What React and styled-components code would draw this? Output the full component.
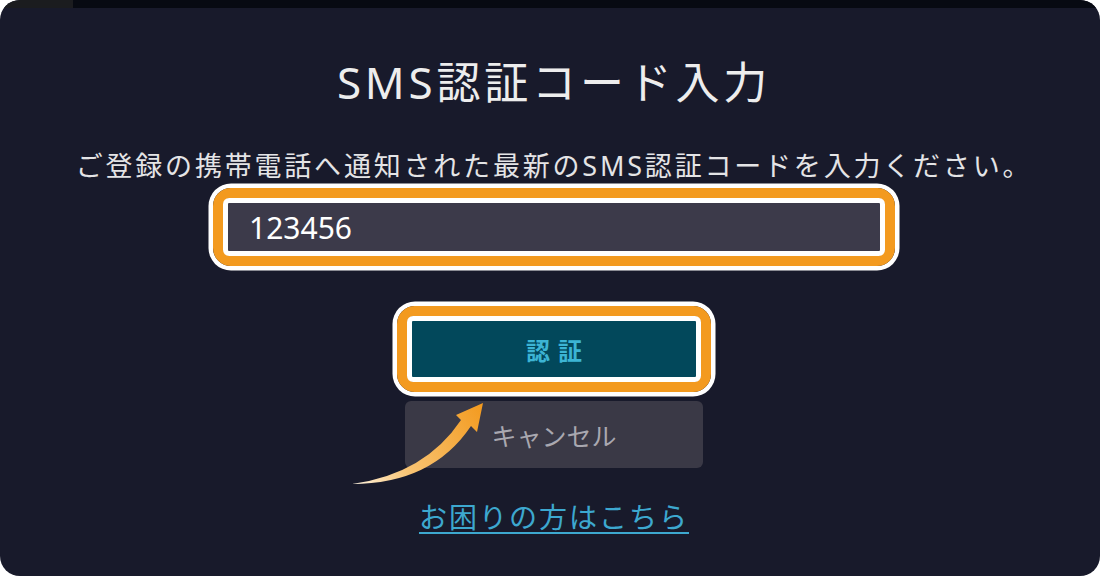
import React from 'react';
import styled, { createGlobalStyle } from 'styled-components';

const GlobalStyle = createGlobalStyle`
  html, body {
    margin: 0;
    background: #ffffff;
  }
  body {
    font-family: "Noto Sans", "Noto Sans CJK JP", sans-serif;
  }
`;

export default function App() {
  return (
    <>
      <GlobalStyle />
      <Frame>
        <TopStrip>
          <StripPart $w="73px" $c="#1b1c1f" />
          <StripPart $c="#070a12" />
        </TopStrip>
        <Content>
          <Title>SMS認証コード入力</Title>
          <Lead>ご登録の携帯電話へ通知された最新のSMS認証コードを入力ください。</Lead>
          <Highlight $mt="9px">
            <CodeInput defaultValue="123456" readOnly />
          </Highlight>
          <Highlight $mt="40px">
            <AuthButton>認証</AuthButton>
          </Highlight>
          <CancelButton>キャンセル</CancelButton>
          <HelpLink href="#">お困りの方はこちら</HelpLink>
        </Content>
        <Arrow viewBox="340 390 160 110" width="160" height="110">
          <defs>
            <linearGradient id="arrowGrad" x1="352" y1="484" x2="483" y2="404" gradientUnits="userSpaceOnUse">
              <stop offset="0" stopColor="#fff4e2" />
              <stop offset="0.35" stopColor="#f8c474" />
              <stop offset="1" stopColor="#f39a1e" />
            </linearGradient>
          </defs>
          <path
            d="M352 484 Q425 474 461 420 L456 415 L483 403 L477 432 L471 426 Q432 484 352 484 Z"
            fill="url(#arrowGrad)"
          />
        </Arrow>
      </Frame>
    </>
  );
}

const Frame = styled.div`
  position: relative;
  width: 1100px;
  height: 576px;
  border-radius: 20px;
  overflow: hidden;
  background: #181a2b;
  display: flex;
  flex-direction: column;
`;

const TopStrip = styled.div`
  display: flex;
  height: 8px;
`;

const StripPart = styled.div`
  width: ${(p) => p.$w || 'auto'};
  flex: ${(p) => (p.$w ? '0 0 auto' : '1')};
  background: ${(p) => p.$c};
`;

const Content = styled.div`
  display: flex;
  flex-direction: column;
  align-items: center;
  padding-left: 8px;
`;

const Title = styled.h1`
  margin: 52px 0 0;
  font-size: 44px;
  line-height: 44px;
  font-weight: 400;
  letter-spacing: 3.8px;
  color: #ededed;
  white-space: nowrap;
`;

const Lead = styled.p`
  margin: 48px 0 0;
  font-size: 27px;
  line-height: 27px;
  letter-spacing: 2.8px;
  color: #e4e4e6;
  white-space: nowrap;
`;

const Highlight = styled.div`
  margin-top: ${(p) => p.$mt};
  border: 10px solid #f39a1f;
  border-radius: 18px;
  box-shadow: 0 0 0 4.5px #ffffff;
  display: flex;
`;

const CodeInput = styled.input`
  box-sizing: content-box;
  width: 631px;
  height: 48px;
  padding: 0 0 0 21px;
  margin: 0;
  border: 5px solid #ffffff;
  border-radius: 6px;
  background: #3c3a4a;
  color: #ffffff;
  font-family: "Noto Sans", sans-serif;
  font-size: 30px;
  outline: none;
`;

const AuthButton = styled.button`
  box-sizing: content-box;
  width: 284px;
  height: 56px;
  padding: 0;
  margin: 0;
  border: 5px solid #ffffff;
  border-radius: 6px;
  background: #02485b;
  color: #3cb4d4;
  font-family: "Noto Sans CJK JP", sans-serif;
  font-size: 24px;
  font-weight: 700;
  letter-spacing: 8px;
  text-indent: 8px;
  cursor: pointer;
`;

const CancelButton = styled.button`
  margin-top: 9px;
  width: 298px;
  height: 67px;
  padding: 0;
  border: none;
  border-radius: 6px;
  background: #3a3946;
  color: #a9a8b0;
  font-family: "Noto Sans CJK JP", sans-serif;
  font-size: 25px;
  cursor: pointer;
`;

const HelpLink = styled.a`
  margin-top: 35px;
  font-size: 28px;
  line-height: 28px;
  letter-spacing: 2px;
  color: #3da8cf;
  text-decoration: underline;
  text-underline-offset: 4px;
  text-decoration-thickness: 2px;
`;

const Arrow = styled.svg`
  position: absolute;
  left: 340px;
  top: 390px;
`;
